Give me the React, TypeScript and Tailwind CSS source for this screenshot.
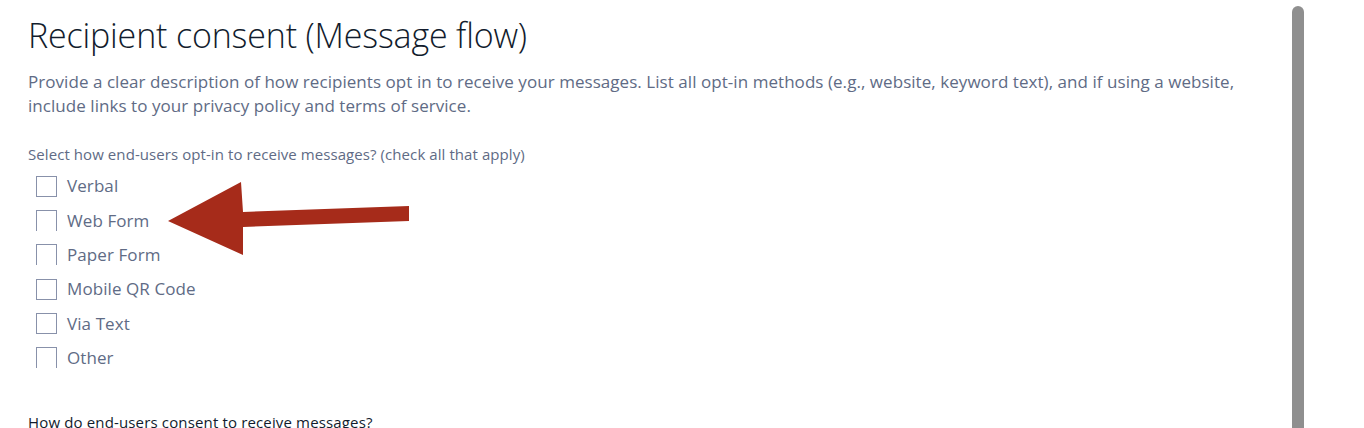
const options = [
  { label: 'Verbal', cut: false },
  { label: 'Web Form', cut: true },
  { label: 'Paper Form', cut: true },
  { label: 'Mobile QR Code', cut: false },
  { label: 'Via Text', cut: false },
  { label: 'Other', cut: true },
];

function Arrow() {
  return (
    <svg
      className="absolute left-0 top-0 pointer-events-none"
      width="420"
      height="270"
      viewBox="0 0 420 270"
    >
      <polygon
        points="168,221 241,182 243,212 409,206 409,221 243,227 243,255"
        fill="#a62b1a"
      />
    </svg>
  );
}

export default function App() {
  return (
    <div className="relative w-[1364px] h-[428px] overflow-hidden bg-white font-['Open_Sans',sans-serif]">
      <div className="flex h-full">
        <div className="flex-1 pl-7 pt-[13px]">
          <h1 className="text-[34px] leading-[44px] font-light tracking-[-0.005em] text-[#121c2d]">
            Recipient consent (Message flow)
          </h1>
          <p className="mt-[13px] w-[1240px] text-[17px] leading-[24px] tracking-[0.003em] text-[#606b85]">
            Provide a clear description of how recipients opt in to receive your
            messages. List all opt-in methods (e.g., website, keyword text), and
            if using a website, include links to your privacy policy and terms of
            service.
          </p>
          <div className="mt-[26px] text-[15px] leading-[20px] tracking-[0.005em] text-[#606b85]">
            Select how end-users opt-in to receive messages? (check all that apply)
          </div>
          <ul className="mt-[5px] flex flex-col">
            {options.map((o) => (
              <li key={o.label} className="flex items-center h-[34.3px] pl-2">
                <span
                  className={
                    o.cut
                      ? 'w-[21px] h-[21px] border border-b-0 border-[#8891aa] bg-white'
                      : 'w-[21px] h-[21px] border border-[#8891aa] bg-white'
                  }
                />
                <span className="ml-[10px] text-[17px] tracking-[0.005em] text-[#606b85]">
                  {o.label}
                </span>
              </li>
            ))}
          </ul>
          <div className="mt-[37px] text-[15px] leading-[20px] tracking-[0.01em] text-[#121c2d]">
            How do end-users consent to receive messages?
          </div>
        </div>
        <div className="w-[72px] flex justify-start">
          <div className="mt-[6px] w-[12px] h-full rounded-t-full bg-[#8f8f8f]" />
        </div>
      </div>
      <Arrow />
    </div>
  );
}
